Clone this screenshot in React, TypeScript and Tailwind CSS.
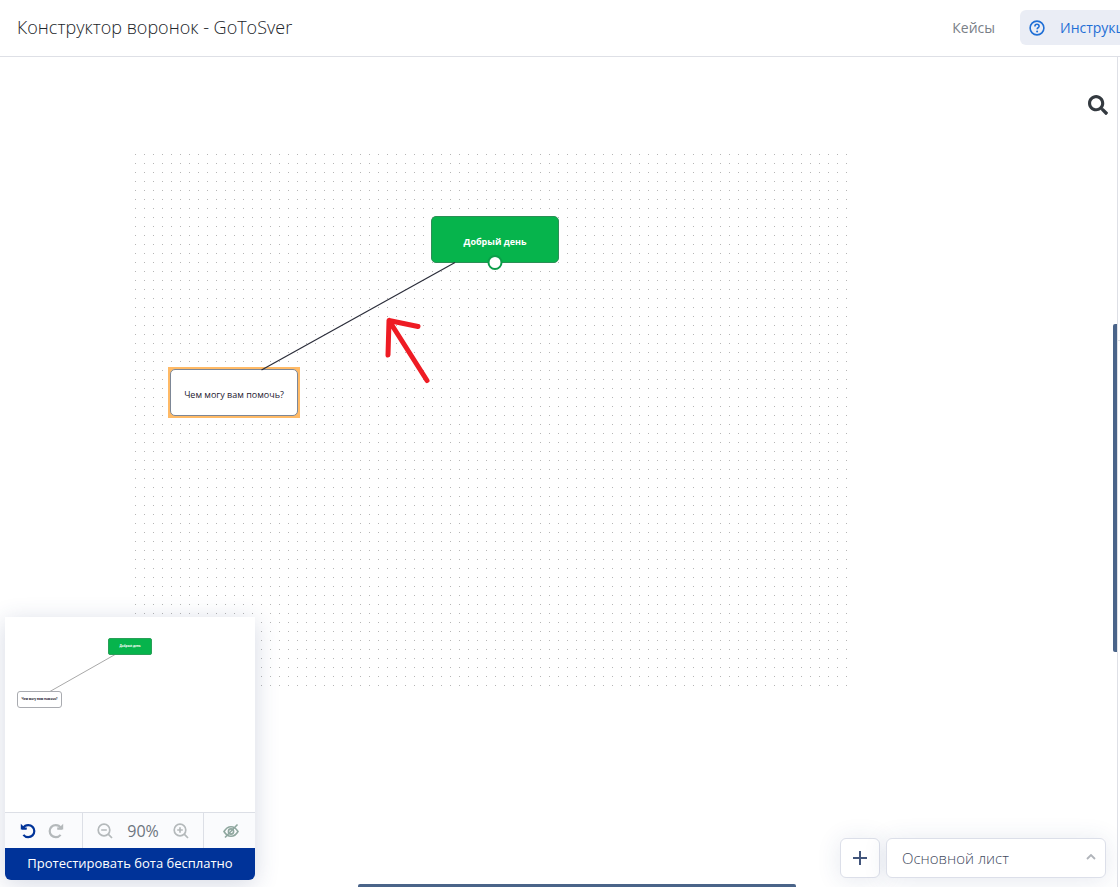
import { useState } from "react";
import { FaSearch } from "react-icons/fa";

interface NodeData {
  id: string;
  label: string;
  x: number;
  y: number;
  kind: "start" | "message";
}

const NODES: NodeData[] = [
  { id: "hello", label: "Добрый день", x: 300, y: 66, kind: "start" },
  { id: "help", label: "Чем могу вам помочь?", x: 39, y: 219, kind: "message" },
];

function HelpIcon() {
  return (
    <svg className="size-4 shrink-0" viewBox="0 0 16 16" fill="none" stroke="currentColor" strokeWidth="1.600">
      <circle cx="8" cy="8" r="6.900" />
      <path d="M5.900 6.400c0-1.300.9-2.100 2.100-2.100s2.100.8 2.100 1.900c0 1.400-1.900 1.600-1.900 3.100" />
      <circle cx="8.100" cy="11.400" r="1" fill="currentColor" stroke="none" />
    </svg>
  );
}

function TurnIcon() {
  return (
    <svg className="size-4" viewBox="0 0 16 16" fill="none" stroke="currentColor" strokeWidth="2.200">
      <path d="M.8.800v5.800h5.800L4.800 4.800z" fill="currentColor" stroke="none" />
      <path d="M2 5.500h4.800" />
      <path d="M3 5C4.300 3.100 6 2.100 8.200 2.100c3.500 0 6.100 2.700 6.100 6s-2.600 6.100-6.100 6.100c-2 0-3.600-.8-4.800-2.300" />
    </svg>
  );
}

function ZoomIcon({ plus = false }: { plus?: boolean }) {
  return (
    <svg className="size-4" viewBox="0 0 16 16" fill="none" stroke="currentColor" strokeWidth="1.700">
      <circle cx="7" cy="7" r="5.800" />
      <path d="M11.200 11.200L15 15M4.200 7h5.600" />
      {plus && <path d="M7 4.200v5.600" />}
    </svg>
  );
}

function HiddenIcon() {
  return (
    <svg className="size-4" viewBox="0 0 16 16" fill="none" stroke="currentColor" strokeWidth="1.600">
      <path d="M1 8.500c2-3.300 4.200-4.800 7-4.800s5 1.500 7 4.800c-2 3.300-4.200 4.800-7 4.800S3 11.800 1 8.500z" />
      <circle cx="8" cy="8.500" r="2.600" />
      <path d="M2 14.500L14.500 1.500" />
    </svg>
  );
}

function FlowNode({ node, isSelected }: { node: NodeData; isSelected: boolean }) {
  const isStart = node.kind === "start";

  return (
    <div
      className={`absolute flex h-[47px] w-32 items-center justify-center rounded-[5px] border pt-1 font-['Open_Sans',sans-serif] text-[9px] leading-3 whitespace-nowrap ${
        isStart
          ? "border-[#2a8f55] bg-[#06b44c] font-bold text-white"
          : "border-[#7d8796] bg-white font-medium text-[#1d2030]"
      }`}
      style={{ left: node.x, top: node.y }}
    >
      {isSelected && <span className="absolute -inset-[3px] -z-10 bg-[#ffba66]" />}
      {node.label}
      {isStart && (
        <span className="absolute -bottom-2 left-1/2 size-[15px] -translate-x-1/2 rounded-full border-2 border-[#0b9d49] bg-white" />
      )}
    </div>
  );
}

function Canvas() {
  return (
    <div className="absolute top-[93px] left-[131px] isolate h-[540px] w-[720px]">
      <svg className="absolute inset-0 -z-20 size-full">
        <defs>
          <pattern id="dots" width="9" height="9" patternUnits="userSpaceOnUse">
            <rect x="4" y="4" width="1" height="1" fill="#b5b5b5" />
          </pattern>
        </defs>
        <rect width="720" height="540" fill="url(#dots)" />
      </svg>

      {NODES.map((node) => (
        <FlowNode key={node.id} node={node} isSelected={node.id === "help"} />
      ))}

      {/* Link and the red pointer drawn over it */}
      <svg className="pointer-events-none absolute inset-0 size-full" fill="none">
        <path d="M324 112.500L130.500 220" stroke="#2b2d3a" strokeWidth="1.200" />
        <path
          d="M296 230.500L258 170.500L257 205M258 170.500L287 176.500"
          stroke="#ee1c24"
          strokeWidth="5"
          strokeLinecap="round"
          strokeLinejoin="round"
        />
      </svg>
    </div>
  );
}

function MiniMap() {
  return (
    <div className="relative h-[195px] bg-white font-['Open_Sans',sans-serif] text-[3px] leading-none">
      <svg className="absolute inset-0 size-full">
        <path d="M111 37L44 75" stroke="#a9a9a9" />
      </svg>
      <div className="absolute top-[21px] left-[103px] flex h-[17px] w-11 items-center justify-center rounded-xs border border-[#2a9f58] bg-[#06b44c] font-bold text-white">
        Добрый день
      </div>
      <div className="absolute top-[74px] left-3 flex h-[17px] w-[45px] items-center justify-center rounded-[3px] border border-[#a9abb0] bg-white font-bold whitespace-nowrap text-[#1d2030]">
        Чем могу вам помочь?
      </div>
    </div>
  );
}

function ControlPanel() {
  const [zoom, setZoom] = useState(90);

  return (
    <section className="absolute bottom-[7px] left-[5px] w-[250px] overflow-hidden rounded-b-md shadow-[0_4px_24px_rgba(45,65,120,0.2)]">
      <MiniMap />
      <div className="flex h-9 border-t border-[#dcdfe6] bg-[#fafbfd] text-[#b4b9bb]">
        <div className="flex w-[78px] items-center gap-3 border-r border-[#dcdfe6] pl-[15px]">
          <button aria-label="Отменить" className="text-[#003399]">
            <TurnIcon />
          </button>
          <button aria-label="Повторить" className="-scale-x-100">
            <TurnIcon />
          </button>
        </div>
        <div className="flex flex-1 items-center justify-between border-r border-[#dcdfe6] px-[14px]">
          <button aria-label="Уменьшить" onClick={() => setZoom(zoom - 10)}>
            <ZoomIcon />
          </button>
          <span className="text-[16px] text-[#6c757d]">{zoom}%</span>
          <button aria-label="Увеличить" onClick={() => setZoom(zoom + 10)}>
            <ZoomIcon plus />
          </button>
        </div>
        <button aria-label="Скрыть карту" className="flex w-[51px] items-center justify-center pl-0.5 text-[#8fa79f]">
          <HiddenIcon />
        </button>
      </div>
      <button className="block h-8 w-full bg-[#003399] text-[13px] text-white">
        Протестировать бота бесплатно
      </button>
    </section>
  );
}

function SheetBar() {
  return (
    <div className="absolute right-[11px] bottom-[9px] flex gap-1.5 text-[#3f4a5e]">
      <button
        aria-label="Добавить лист"
        className="flex size-10 items-center justify-center rounded-md border border-[#dcdfe9] bg-white shadow-[0_2px_24px_rgba(45,65,120,0.12)]"
      >
        <svg className="size-4" viewBox="0 0 16 16" stroke="#42557b" strokeWidth="2">
          <path d="M8 1v14M1 8h14" />
        </svg>
      </button>
      <div className="relative">
        <select
          aria-label="Лист"
          className="h-10 w-[220px] appearance-none rounded-md border border-[#dcdfe9] bg-white px-[15px] text-[15px] font-light shadow-[0_2px_24px_rgba(45,65,120,0.12)]"
        >
          <option>Основной лист</option>
        </select>
        <svg
          className="pointer-events-none absolute top-4 right-2.5 h-1.5 w-2.5"
          viewBox="0 0 10 6"
          fill="none"
          stroke="#b0b4ba"
          strokeWidth="1.800"
        >
          <path d="M1 5l4-4 4 4" />
        </svg>
      </div>
    </div>
  );
}

export default function App() {
  return (
    <div className="flex h-screen flex-col overflow-hidden bg-white font-['Open_Sans',sans-serif]">
      <header className="flex h-[57px] shrink-0 items-center justify-between border-b border-[#dee0e6] pb-px pl-[17px]">
        <h1 className="text-[18px] font-light text-[#212529]">Конструктор воронок - GoToSver</h1>
        <nav className="flex items-center gap-[25px] text-sm">
          <a href="#cases" className="text-[#7a8087]">
            Кейсы
          </a>
          <a
            href="#help"
            className="flex h-[35px] w-[100px] items-center gap-[15px] overflow-hidden rounded-l-md bg-[#eaedf5] pl-[9px] text-[#1f6fd6]"
          >
            <HelpIcon />
            Инструкции
          </a>
        </nav>
      </header>

      <div className="flex min-h-0 flex-1">
        <main className="relative flex-1 overflow-hidden">
          <Canvas />
          <button aria-label="Поиск" className="absolute top-[38px] right-[9px] text-[#343a40]">
            <FaSearch className="size-5" />
          </button>
          <ControlPanel />
          <SheetBar />

          {/* Scroll thumbs */}
          <span className="absolute top-[267px] right-0 h-[328px] w-1 rounded-l-xs bg-[#4a6489]" />
          <span className="absolute bottom-0 left-[358px] h-[3px] w-[438px] rounded-t-xs bg-[#4a6489]" />
        </main>
        <aside className="w-[3px] border-l border-[#dee0e6] pt-[283px]">
          <hr className="border-[#dee0e6]" />
        </aside>
      </div>
    </div>
  );
}
